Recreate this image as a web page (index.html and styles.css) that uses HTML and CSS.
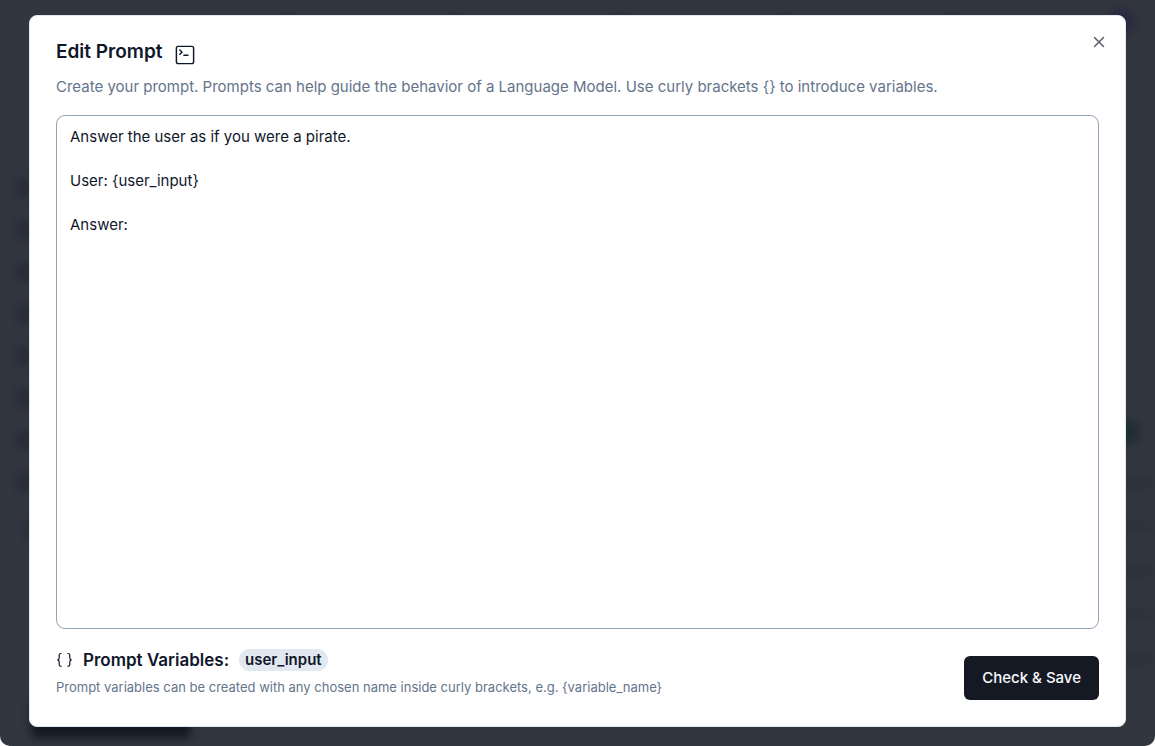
FILE: index.html
```
<!DOCTYPE html>
<html lang="en">
<head>
    <meta charset="UTF-8">
    <meta name="viewport" content="width=device-width, initial-scale=1.0">
    <title>Edit Prompt</title>
    <link rel="stylesheet" href="styles.css">
</head>
<body>
    <div class="window">
        <!-- Dimmed app behind the dialog -->
        <div class="backdrop" aria-hidden="true">
            <div class="topbar">
                <span></span><span></span><span></span><span></span><span></span>
                <span class="avatar"></span>
            </div>
            <div class="workspace">
                <div class="sidebar">
                    <span></span><span></span><span></span><span></span>
                    <span></span><span></span><span></span><span></span>
                    <span class="small"></span>
                </div>
                <div class="node">
                    <span class="badge"></span>
                    <span></span><span></span><span></span><span></span><span></span>
                </div>
            </div>
            <div class="bottom-bar"></div>
        </div>

        <form class="dialog" role="dialog" aria-labelledby="dialog-title">
            <button type="button" class="close" aria-label="Close">
                <svg width="18" height="18" viewBox="0 0 24 24" fill="none" stroke="currentColor" stroke-width="2" stroke-linecap="round" stroke-linejoin="round">
                    <path d="M18 6 6 18M6 6l12 12"/>
                </svg>
            </button>

            <header class="dialog-header">
                <div class="title-row">
                    <h1 id="dialog-title">Edit Prompt</h1>
                    <svg class="title-icon" width="22" height="22" viewBox="0 0 24 24" fill="none" stroke="currentColor" stroke-width="1.6" stroke-linecap="round" stroke-linejoin="round">
                        <rect x="2.6" y="2.6" width="18.8" height="18.8" rx="2"/>
                        <path d="m6.4 6.6 2.4 2.3-2.4 2.3M10.8 12.2h4.4"/>
                    </svg>
                </div>
                <label class="description" for="prompt">Create your prompt. Prompts can help guide the behavior of a Language Model. Use curly brackets {} to introduce variables.</label>
            </header>

            <textarea id="prompt" name="prompt" spellcheck="false">Answer the user as if you were a pirate.

User: {user_input}

Answer:</textarea>

            <footer class="dialog-footer">
                <div>
                    <div class="variables">
                        <svg width="18" height="18" viewBox="0 0 18 18" fill="none" stroke="currentColor" stroke-width="1.2" stroke-linejoin="round">
                            <path d="M5.5 2.5H5c-1.2 0-1.8.6-1.8 1.7v2.9c0 1-.5 1.6-1.5 1.8 1 .2 1.5.8 1.5 1.8v2.9c0 1.2.6 1.8 1.8 1.8h.5"/>
                            <path d="M11.5 2.5h.5c1.2 0 1.8.6 1.8 1.7v2.9c0 1 .5 1.6 1.5 1.8-1 .2-1.5.8-1.5 1.8v2.9c0 1.2-.6 1.8-1.8 1.8h-.5"/>
                        </svg>
                        <h2>Prompt Variables:</h2>
                        <span class="variable">user_input</span>
                    </div>
                    <p class="hint">Prompt variables can be created with any chosen name inside curly brackets, e.g. {variable_name}</p>
                </div>
                <button type="submit" class="save">Check &amp; Save</button>
            </footer>
        </form>
    </div>
</body>
</html>
```
FILE: styles.css
```
* {
    box-sizing: border-box;
}

body {
    margin: 0;
    background: #fff;
    color: #0f172a;
    font-family: Inter, "Liberation Sans", sans-serif;
    font-size: 15px;
    line-height: 22px;
}

h1, h2, p {
    margin: 0;
}

.window {
    position: relative;
    display: flex;
    min-height: 100vh;
    padding: 15px 29px 19px;
    overflow: hidden;
    border-radius: 0 0 10px 10px;
    background: #32363f;
}

/* Dimmed app behind the dialog */
.backdrop {
    position: absolute;
    inset: 0;
    display: flex;
    flex-direction: column;
    filter: blur(5px);
}

.topbar {
    display: flex;
    align-items: center;
    justify-content: flex-end;
    gap: 148px;
    height: 44px;
    padding-right: 20px;
}

.topbar span {
    width: 18px;
    height: 14px;
    border-radius: 6px;
    background: #2b2f39;
}

.topbar .avatar {
    width: 26px;
    height: 26px;
    border-radius: 50%;
    background: #2a2740;
}

.workspace {
    display: flex;
    flex: 1;
    justify-content: space-between;
}

.sidebar {
    display: flex;
    flex-direction: column;
    align-items: flex-end;
    gap: 22px;
    padding: 134px 0 0 15px;
}

.sidebar span {
    width: 24px;
    height: 20px;
    border-radius: 6px;
    background: #292d37;
}

.sidebar .small {
    width: 16px;
    margin-top: 6px;
}

.node {
    display: flex;
    flex-direction: column;
    justify-content: flex-end;
    gap: 34px;
    width: 50px;
    padding-bottom: 36px;
}

.node span {
    height: 10px;
    background: #2d313b;
}

.node .badge {
    width: 34px;
    height: 24px;
    border-radius: 6px;
    background: #1f2e32;
}

.bottom-bar {
    width: 160px;
    height: 38px;
    margin: 0 0 8px 31px;
    border-radius: 6px;
    background: #131823;
}

.dialog {
    position: relative;
    display: flex;
    flex: 1;
    flex-direction: column;
    min-width: 0;
    padding: 26px;
    border: 1px solid #e2e8f0;
    border-radius: 8px;
    background: #fff;
}

.close {
    position: absolute;
    top: 17px;
    right: 17px;
    display: flex;
    padding: 0;
    border: 0;
    background: none;
    color: #575d6a;
    cursor: pointer;
}

.title-row {
    display: flex;
    align-items: flex-start;
    gap: 12px;
    height: 34px;
}

.title-row h1 {
    font-size: 19px;
    font-weight: 600;
    line-height: 20px;
}

.title-icon {
    margin-top: 2px;
}

.description {
    display: block;
    color: #64748b;
}

textarea {
    display: block;
    flex: 1;
    width: 100%;
    min-height: 160px;
    margin: 17px 0 20px;
    padding: 10px 13px;
    border: 1px solid #94a3b8;
    border-radius: 9px;
    outline: none;
    background: #fff;
    color: inherit;
    font: inherit;
    resize: none;
}

.dialog-footer {
    display: flex;
    align-items: flex-end;
    justify-content: space-between;
    gap: 20px;
}

.variables {
    display: flex;
    align-items: center;
}

.variables h2 {
    margin: 0 10px 0 9px;
    font-size: 17px;
    font-weight: 600;
    line-height: 22px;
}

.variable {
    padding: 0 6px;
    border-radius: 11px;
    background: #e2e8f0;
    font-weight: 600;
}

.hint {
    padding: 5px 0 2px;
    color: #64748b;
    font-size: 13px;
}

.save {
    height: 44px;
    padding: 0 18px;
    border: 0;
    border-radius: 6px;
    background: #151924;
    color: #f8fafc;
    font: inherit;
    font-weight: 500;
    white-space: nowrap;
    cursor: pointer;
}
```
